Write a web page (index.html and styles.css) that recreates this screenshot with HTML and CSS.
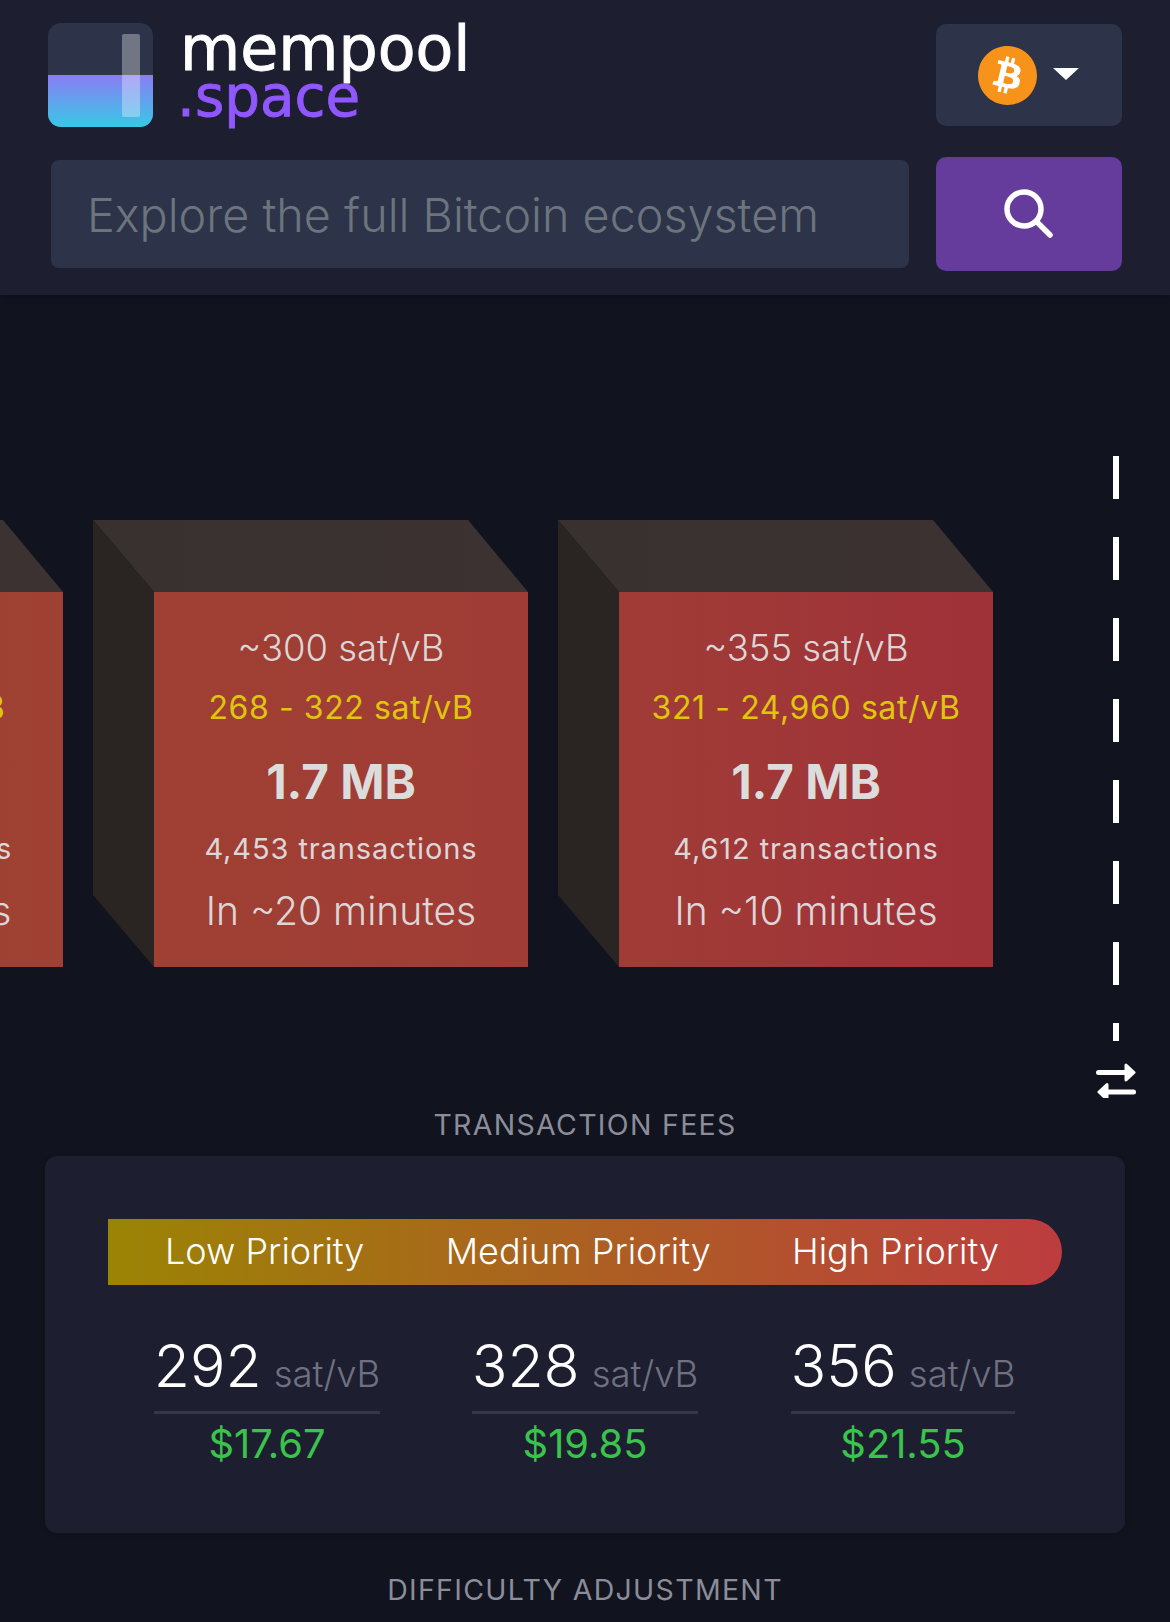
FILE: index.html
```html
<!DOCTYPE html>
<html lang="en">
<head>
<meta charset="utf-8">
<title>mempool.space</title>
<link rel="stylesheet" href="styles.css">
</head>
<body>
<header class="header">
  <a class="brand">
    <svg class="brand-mark" viewBox="0 0 105 104" aria-hidden="true">
      <defs>
        <clipPath id="markClip"><rect width="105" height="104" rx="13"/></clipPath>
        <linearGradient id="markFill" x1="0" y1="0" x2="0" y2="1">
          <stop offset="0" stop-color="#8a7df4"/>
          <stop offset="1" stop-color="#38c8e6"/>
        </linearGradient>
      </defs>
      <g clip-path="url(#markClip)">
        <rect width="105" height="104" fill="#2d3348"/>
        <rect y="52" width="105" height="52" fill="url(#markFill)"/>
      </g>
      <rect x="74" y="11" width="18" height="83" rx="2" fill="#fff" fill-opacity=".33"/>
    </svg>
    <span class="brand-text">
      <span class="brand-name">mempool</span>
      <span class="brand-tld">.space</span>
    </span>
  </a>
  <button class="network" type="button">
    <svg class="btc" viewBox="0 0 24 24" aria-hidden="true">
      <circle cx="12" cy="12" r="10" fill="#fff"/>
      <path fill="#f7931a" d="M23.638 14.904c-1.602 6.43-8.113 10.34-14.542 8.736C2.67 22.05-1.244 15.525.362 9.105 1.962 2.67 8.475-1.243 14.9.358c6.43 1.605 10.342 8.115 8.738 14.548v-.002zm-6.35-4.613c.24-1.59-.974-2.45-2.64-3.03l.54-2.153-1.315-.33-.525 2.107c-.345-.087-.705-.167-1.064-.25l.526-2.127-1.32-.33-.54 2.165c-.285-.067-.565-.132-.84-.2l-1.815-.45-.35 1.407s.975.225.955.236c.535.136.63.486.615.766l-1.477 5.92c-.075.166-.24.406-.614.314.015.02-.96-.24-.96-.24l-.66 1.51 1.71.426.93.242-.54 2.19 1.32.327.54-2.17c.36.1.705.19 1.05.273l-.51 2.154 1.32.33.545-2.19c2.24.427 3.93.257 4.64-1.774.57-1.637-.03-2.58-1.217-3.196.854-.193 1.5-.76 1.68-1.93h.01zm-3.01 4.22c-.404 1.64-3.157.75-4.05.53l.72-2.9c.896.23 3.757.67 3.33 2.37zm.41-4.24c-.37 1.49-2.662.735-3.405.55l.654-2.64c.744.18 3.137.52 2.75 2.084v.006z"/>
    </svg>
    <span class="caret"></span>
  </button>
  <div class="search-input">Explore the full Bitcoin ecosystem</div>
  <button class="search-button" type="button" aria-label="Search">
    <svg class="search-icon" viewBox="0 0 50 50" aria-hidden="true">
      <circle cx="20" cy="20" r="17" fill="none" stroke="#fff" stroke-width="5.5"/>
      <path d="M32.5 32.500 46 46" fill="none" stroke="#fff" stroke-width="5.500" stroke-linecap="round"/>
    </svg>
  </button>
</header>

<main class="main">
  <section class="chain">
    <div class="chain-track">
      <article class="block block-a">
        <div class="fee">~250 sat/vB</div>
        <div class="range">221 - 268 sat/vB</div>
        <div class="size">1.7 MB</div>
        <div class="count">4,508 transactions</div>
        <div class="eta">In ~30 minutes</div>
      </article>
      <article class="block block-b">
        <div class="fee">~300 sat/vB</div>
        <div class="range">268 - 322 sat/vB</div>
        <div class="size">1.7 MB</div>
        <div class="count">4,453 transactions</div>
        <div class="eta">In ~20 minutes</div>
      </article>
      <article class="block block-c">
        <div class="fee">~355 sat/vB</div>
        <div class="range">321 - 24,960 sat/vB</div>
        <div class="size">1.7 MB</div>
        <div class="count">4,612 transactions</div>
        <div class="eta">In ~10 minutes</div>
      </article>
    </div>
    <div class="divider"></div>
    <svg class="swap" viewBox="0 0 40 38" aria-hidden="true">
      <path d="M2.500 9.500H30" fill="none" stroke="#fff" stroke-width="5" stroke-linecap="round"/>
      <path d="M30 2 38 9.500 30 17Z" fill="#fff" stroke="#fff" stroke-width="3" stroke-linejoin="round"/>
      <path d="M37.500 29H10" fill="none" stroke="#fff" stroke-width="5" stroke-linecap="round"/>
      <path d="M11 21.500 3 29 11 36.500Z" fill="#fff" stroke="#fff" stroke-width="3" stroke-linejoin="round"/>
    </svg>
  </section>

  <h2 class="section-title title-fees">TRANSACTION FEES</h2>
  <section class="card">
    <div class="priority-bar">
      <span>Low Priority</span>
      <span>Medium Priority</span>
      <span>High Priority</span>
    </div>
    <div class="fee-grid">
      <div class="fee-cell">
        <div class="fee-rate"><span class="rate-value">292</span><span class="rate-unit">sat/vB</span></div>
        <div class="fee-fiat">$17.67</div>
      </div>
      <div class="fee-cell">
        <div class="fee-rate"><span class="rate-value">328</span><span class="rate-unit">sat/vB</span></div>
        <div class="fee-fiat">$19.85</div>
      </div>
      <div class="fee-cell">
        <div class="fee-rate"><span class="rate-value">356</span><span class="rate-unit">sat/vB</span></div>
        <div class="fee-fiat">$21.55</div>
      </div>
    </div>
  </section>
  <h2 class="section-title title-difficulty">DIFFICULTY ADJUSTMENT</h2>
</main>
</body>
</html>
```
FILE: styles.css
```css
* { box-sizing: border-box; }
html, body { margin: 0; height: 100%; }
body {
  width: 1170px;
  height: 1622px;
  overflow: hidden;
  background: #11131f;
  color: #fff;
  font-family: Inter, "Noto Sans", sans-serif;
}

/* Header */
.header {
  height: 295px;
  background: #1d1f31;
  box-shadow: 0 2px 6px rgba(0, 0, 0, .3);
  padding: 23px 48px 0 51px;
  display: grid;
  grid-template-columns: 1fr 186px;
  grid-template-rows: 104px 114px;
  column-gap: 27px;
  row-gap: 30px;
  align-items: center;
  position: relative;
}
.brand { display: flex; align-items: flex-start; margin-left: -3px; }
.brand-mark { width: 105px; height: 104px; flex: none; }
.brand-text {
  display: flex;
  flex-direction: column;
  margin-left: 27px;
  padding-top: 2px;
  font-family: "DejaVu Sans", sans-serif;
  -webkit-text-stroke: .9px currentColor;
}
.brand-name { font-size: 61.800px; line-height: 49px; height: 49px; }
.brand-tld { font-size: 56.300px; line-height: 46px; color: #9157ff; margin-left: -3px; }

.network {
  height: 102px;
  background: #2d3348;
  border: 0;
  border-radius: 10px;
  display: flex;
  align-items: center;
  justify-content: center;
  gap: 16px;
  padding: 0 2px 0 0;
}
.btc { width: 59px; height: 59px; }
.caret {
  width: 0;
  height: 0;
  border-left: 13.500px solid transparent;
  border-right: 13.500px solid transparent;
  border-top: 12px solid #fff;
  margin-top: -2px;
}
.search-input {
  height: 108px;
  background: #2d3348;
  border-radius: 8px;
  padding: 2px 0 0 36px;
  display: flex;
  align-items: center;
  font-size: 46.700px;
  font-weight: 300;
  color: #6c757d;
}
.search-button {
  height: 114px;
  background: #653b9c;
  border: 0;
  border-radius: 10px;
  display: flex;
  align-items: center;
  justify-content: center;
  padding: 0;
}
.search-icon { width: 50px; height: 50px; }

/* Blocks */
.main { display: block; }
.chain { height: 803px; position: relative; overflow: hidden; }
.chain-track {
  display: flex;
  gap: 91px;
  margin-left: -311px;
  padding-top: 297px;
}
.block {
  position: relative;
  flex: none;
  width: 374px;
  height: 375px;
  padding-top: 29px;
  text-align: center;
  color: #ddd6d7;
}
.block::before {
  content: "";
  position: absolute;
  left: -61px;
  top: -72px;
  width: 435px;
  height: 72px;
  background: linear-gradient(90deg, #393030, #3c3232);
  clip-path: polygon(0 0, 375px 0, 100% 100%, 61px 100%);
}
.block::after {
  content: "";
  position: absolute;
  left: -61px;
  top: -72px;
  width: 61px;
  height: 447px;
  background: #2a2423;
  clip-path: polygon(0 0, 100% 72px, 100% 100%, 0 375px);
}
.block-a { background: linear-gradient(90deg, #9b4531, #9f4033); }
.block-b { background: linear-gradient(90deg, #9f4033, #a03c36); }
.block-c { background: linear-gradient(90deg, #a03c36, #9f3139); }
.fee { font-size: 36.400px; line-height: 54px; font-weight: 300; }
.range { font-size: 32px; line-height: 44px; margin-top: 11px; color: #e0c50e; letter-spacing: .6px; font-weight: 400; }
.size { font-size: 47.500px; line-height: 60px; margin-top: 22px; font-weight: 700; color: #dcdcdc; }
.count { font-size: 29px; line-height: 40px; margin-top: 17px; letter-spacing: .9px; font-weight: 400; }
.eta { font-size: 39px; line-height: 50px; margin-top: 17px; font-weight: 300; }

.divider {
  position: absolute;
  left: 1113px;
  top: 161px;
  width: 6px;
  height: 585px;
  background: repeating-linear-gradient(180deg, #fff 0, #fff 43px, transparent 43px, transparent 81px);
}
.swap { position: absolute; left: 1096px; top: 768px; width: 40px; height: 38px; }

/* Fee card */
.section-title {
  margin: 0;
  text-align: center;
  font-size: 28.500px;
  line-height: 36px;
  font-weight: 400;
  letter-spacing: 1.300px;
  color: #8b8d99;
}
.title-fees { margin-top: 9px; }
.title-difficulty { margin-top: 39px; }
.card {
  margin: 13px 45px 0;
  height: 377px;
  background: #1d1f31;
  border-radius: 12px;
  padding: 63px 63px 0;
  box-shadow: 0 0 4px rgba(0, 0, 0, .25);
}
.priority-bar {
  height: 66px;
  border-radius: 0 33px 33px 0;
  background: linear-gradient(90deg, #9b8404, #bd3c3f);
  display: flex;
  align-items: center;
  justify-content: space-between;
  padding: 0 63px 2px 57px;
  font-size: 36px;
  font-weight: 300;
}
.fee-grid { display: grid; grid-template-columns: repeat(3, 318px); margin-top: 46px; }
.fee-cell { display: flex; flex-direction: column; align-items: center; }
.fee-rate {
  display: flex;
  align-items: baseline;
  gap: 12px;
  padding: 0 0 10px;
  border-bottom: 3px solid #353748;
}
.rate-value { font-size: 59px; line-height: 70px; font-weight: 300; }
.rate-unit { font-size: 36.500px; font-weight: 300; color: #6f7180; }
.fee-fiat { font-size: 39.800px; line-height: 50px; margin-top: 5px; font-weight: 400; color: #3bc44b; }
```
